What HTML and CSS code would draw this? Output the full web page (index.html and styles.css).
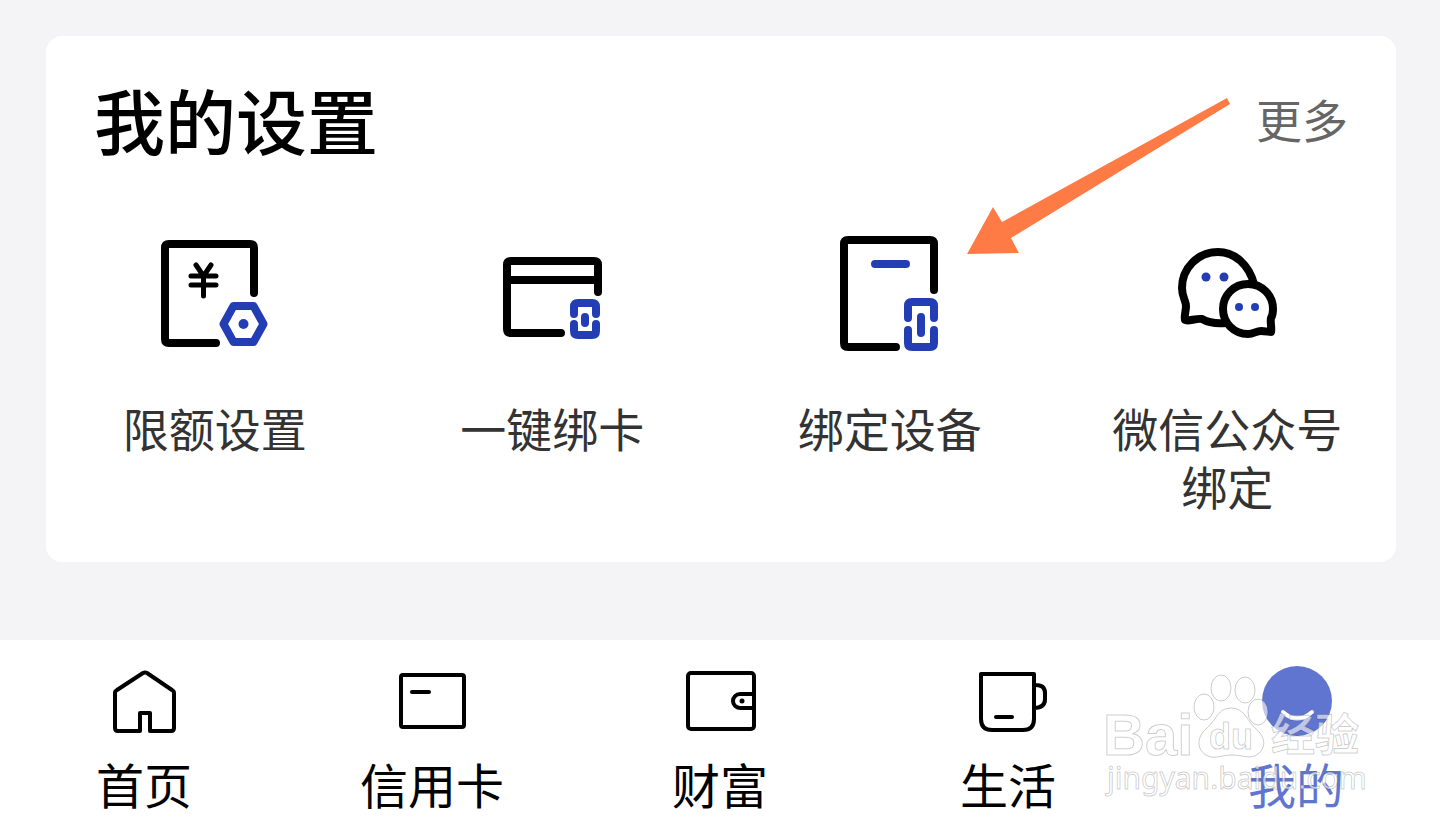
FILE: index.html
```html
<!DOCTYPE html>
<html lang="zh-CN">

<head>
    <meta charset="UTF-8">
    <meta name="viewport" content="width=device-width, initial-scale=1">
    <title>我的</title>
    <link rel="stylesheet" href="styles.css">
</head>

<body>

    <main>
        <section class="card">
            <header class="card-head">
                <h1>我的设置</h1>
                <a class="more" href="#more">更多</a>
            </header>

            <div class="settings">
                <a class="setting" href="#limit">
                    <svg class="icon" viewBox="0 0 120 120" aria-hidden="true">
                        <path d="M99 59V14q0-4-4-4H14q-4 0-4 4v91q0 4 4 4h47" />
                        <path class="thin" d="M41 31l7.500 11 7.500-11M48.500 42v20M36 42h25M36 51h25" />
                        <path class="blue" d="M78.500 72h20l10 18-10 18h-20l-10-18z" />
                        <circle class="dot" cx="88.500" cy="90" r="5" />
                    </svg>
                    <span>限额设置</span>
                </a>
                <a class="setting" href="#bind-card">
                    <svg class="icon" viewBox="0 0 120 120" aria-hidden="true">
                        <path d="M106 58V31q0-4-4-4H19q-4 0-4 4v64q0 4 4 4h50M15 46h91" />
                        <path class="blue" d="M82 80v-7q0-4 4-4h14q4 0 4 4v7M82 90v7q0 4 4 4h14q4 0 4-4v-7M93 83v6" />
                    </svg>
                    <span>一键绑卡</span>
                </a>
                <a class="setting" href="#bind-device">
                    <svg class="icon" viewBox="0 0 120 120" aria-hidden="true">
                        <path d="M104 56V10q0-4-4-4H18q-4 0-4 4v99q0 4 4 4h48" />
                        <path class="blue" d="M45 30h31M78 84V72q0-4 4-4h18q4 0 4 4v12M78 96v13q0 4 4 4h18q4 0 4-4V96M91 83v16" />
                    </svg>
                    <span>绑定设备</span>
                </a>
                <a class="setting" href="#wechat">
                    <svg class="icon" viewBox="0 0 120 120" aria-hidden="true">
                        <path d="M87 50C82 31 68 18 51 18C31 18 15 34 15 54C15 63 19 67 19 72C19 77 17 82 18 86C21 88 29 84 35 85C42 89 49 90 59 89" />
                        <path class="bubble" d="M81 50C67 50 56 61 56 75C56 89 67 100 81 100C87 100 89 97 94 97C98 97 102 98 104 98C105 94 103 89 104 84C106 81 106 78 106 75C106 61 95 50 81 50z" />
                        <circle class="dot" cx="39" cy="43" r="4.500" />
                        <circle class="dot" cx="57" cy="43" r="4.500" />
                        <circle class="dot" cx="72" cy="73" r="4" />
                        <circle class="dot" cx="88" cy="73" r="4" />
                    </svg>
                    <span>微信公众号绑定</span>
                </a>
            </div>

            <svg class="arrow" viewBox="0 0 280 170" aria-hidden="true">
                <path d="M7 164L33 117L42 132L267 8L270 14L51 148L59 163z" />
            </svg>
        </section>
    </main>

    <nav class="tabs">
        <a class="tab" href="#home">
            <svg class="tab-icon" viewBox="0 0 80 80" aria-hidden="true">
                <path d="M36 69H14q-3 0-3-3V31q0-2 2-3L39 11q2-1 4 0l25 17q2 1 2 3v35q0 3-3 3H46V51H36z" />
            </svg>
            <span>首页</span>
        </a>
        <a class="tab" href="#credit">
            <svg class="tab-icon" viewBox="0 0 80 80" aria-hidden="true">
                <rect x="9" y="13" width="63" height="52" rx="2" />
                <path d="M20 30h17" />
            </svg>
            <span>信用卡</span>
        </a>
        <a class="tab" href="#wealth">
            <svg class="tab-icon" viewBox="0 0 80 80" aria-hidden="true">
                <rect x="8" y="11" width="66" height="56" rx="3" />
                <path d="M74 32H60a7 7 0 0 0 0 14h14" />
                <circle class="hole" cx="62" cy="39" r="2.500" />
            </svg>
            <span>财富</span>
        </a>
        <a class="tab" href="#life">
            <svg class="tab-icon" viewBox="0 0 80 80" aria-hidden="true">
                <path d="M13 12h53v45q0 11-11 11H24q-11 0-11-11zM66 23h2q9 0 9 8v6q0 9-11 9M28 55h16" />
            </svg>
            <span>生活</span>
        </a>
        <a class="tab active" href="#mine" aria-current="page">
            <svg class="tab-icon" viewBox="0 0 80 80" aria-hidden="true">
                <circle class="face" cx="41" cy="39" r="35" />
                <path class="smile" d="M27 50q14 13 29 0" />
            </svg>
            <span>我的</span>
        </a>

        <svg class="watermark" viewBox="0 0 270 140" aria-hidden="true">
            <text class="latin" x="3" y="90">Bai</text>
            <ellipse cx="104" cy="42" rx="10" ry="13" />
            <ellipse cx="121" cy="23" rx="10" ry="13" />
            <ellipse cx="145" cy="25" rx="10" ry="13" />
            <ellipse cx="158" cy="47" rx="10" ry="13" />
            <path d="M131 43C118 43 117 54 107 63C97 71 96 84 106 90C115 95 120 90 132 90C144 90 149 95 158 89C167 82 165 71 155 63C146 54 144 43 131 43z" />
            <text class="du" x="109" y="84">du</text>
            <text class="cjk" x="171" y="86">经验</text>
            <text class="url" x="7" y="124">jingyan.baidu.com</text>
        </svg>
    </nav>

</body>

</html>
```
FILE: styles.css
```css
* {
    box-sizing: border-box;
}

body {
    display: flex;
    flex-direction: column;
    min-height: 100vh;
    margin: 0;
    background-color: #f4f4f7;
    color: black;
    font-family: "Noto Sans CJK SC", sans-serif;
}

a {
    color: inherit;
    text-decoration: none;
}

main {
    flex: 1;
    padding: 36px 44px 36px 46px;
}

.card {
    position: relative;
    padding: 42px 0 48px;
    background-color: white;
    border-radius: 16px;
}

.card-head {
    display: flex;
    align-items: center;
    justify-content: space-between;
    padding: 0 48px;
    margin-bottom: 76px;
}

h1 {
    margin: 0;
    font-size: 71px;
    font-weight: 500;
    line-height: 80px;
}

.more {
    color: #666;
    font-size: 46px;
    line-height: 58px;
}

.settings {
    display: grid;
    grid-template-columns: repeat(4, 1fr);
}

.setting {
    display: flex;
    flex-direction: column;
    align-items: center;
    gap: 44px;
    padding: 0 48px;
    color: #333;
    font-size: 46px;
    line-height: 58px;
    text-align: center;
}

.icon {
    width: 120px;
    height: 120px;
    fill: none;
    stroke: black;
    stroke-width: 8px;
    stroke-linecap: round;
    stroke-linejoin: round;
}

.icon .thin {
    stroke-width: 5px;
}

.icon .blue {
    stroke: #233eb5;
}

.icon .bubble {
    fill: white;
}

.icon .dot {
    fill: #233eb5;
    stroke: none;
}

/* pointer over the card */
.arrow {
    position: absolute;
    top: 54px;
    right: 156px;
    width: 280px;
    height: 170px;
    fill: #ff7b45;
    pointer-events: none;
}

/* bottom tab bar */
.tabs {
    position: relative;
    display: grid;
    grid-template-columns: repeat(5, 1fr);
    padding: 22px 0 18px;
    background-color: white;
}

.tab {
    display: flex;
    flex-direction: column;
    align-items: center;
    gap: 13px;
    font-size: 48px;
    line-height: 56px;
}

.tab-icon {
    width: 80px;
    height: 80px;
    fill: none;
    stroke: black;
    stroke-width: 4px;
    stroke-linecap: round;
    stroke-linejoin: round;
}

.tab-icon .hole {
    fill: black;
    stroke: none;
}

.active {
    color: #6075d0;
}

.tab-icon .face {
    fill: #6075d0;
    stroke: none;
}

.tab-icon .smile {
    stroke: white;
}

.watermark {
    position: absolute;
    top: 25px;
    right: 70px;
    width: 270px;
    height: 140px;
    fill: rgba(255, 255, 255, .6);
    stroke: rgba(0, 0, 0, .2);
    stroke-width: 1px;
    pointer-events: none;
}

.watermark .latin {
    font: bold 58px "Liberation Sans", sans-serif;
}

.watermark .du {
    font: bold 36px "Liberation Sans", sans-serif;
}

.watermark .cjk {
    font: bold 44px "Noto Sans CJK SC", sans-serif;
}

.watermark .url {
    font: 30px "Noto Sans", sans-serif;
}
```
